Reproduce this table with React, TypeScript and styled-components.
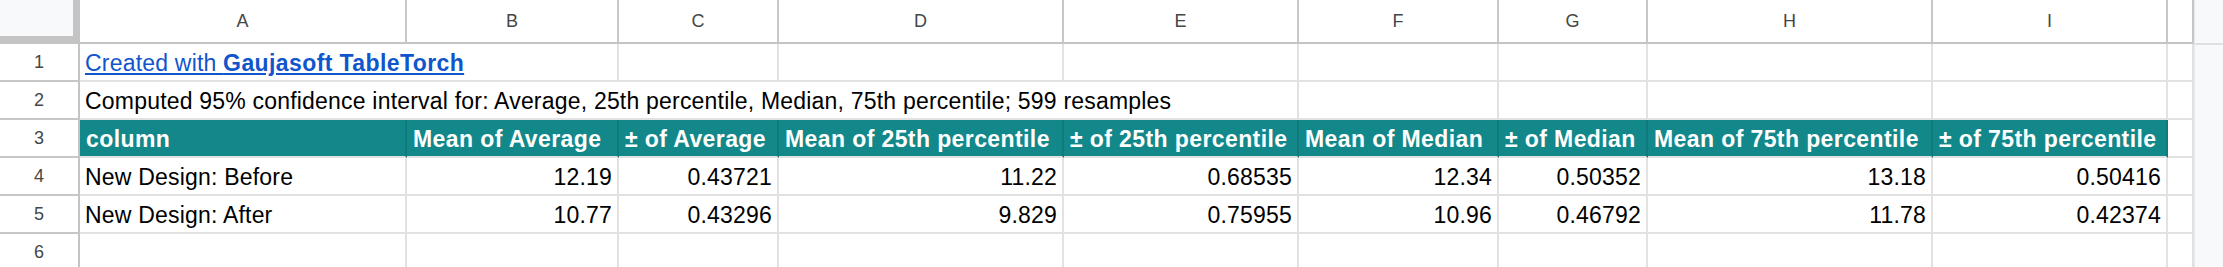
import React from "react";
import styled, { createGlobalStyle } from "styled-components";

const GlobalStyle = createGlobalStyle`
  html, body { margin: 0; padding: 0; background: #ffffff; }
  body { font-family: "Liberation Sans", Arial, sans-serif; overflow: hidden; }
  *, *::before, *::after { box-sizing: border-box; }
`;

const COLS = [327, 212, 160, 285, 235, 200, 149, 285, 235, 26];
const LETTERS = ["A", "B", "C", "D", "E", "F", "G", "H", "I", ""];

const HEADERS = [
  "column",
  "Mean of Average",
  "± of Average",
  "Mean of 25th percentile",
  "± of 25th percentile",
  "Mean of Median",
  "± of Median",
  "Mean of 75th percentile",
  "± of 75th percentile",
];

const ROWS = [
  ["New Design: Before", "12.19", "0.43721", "11.22", "0.68535", "12.34", "0.50352", "13.18", "0.50416"],
  ["New Design: After", "10.77", "0.43296", "9.829", "0.75955", "10.96", "0.46792", "11.78", "0.42374"],
];

const Frame = styled.div`
  display: flex;
  width: 2223px;
  height: 267px;
  overflow: hidden;
`;

const Grid = styled.div`
  display: grid;
  grid-template-columns: 80px ${COLS.map((c) => `${c}px`).join(" ")};
  grid-template-rows: 44px repeat(6, 38px);
  width: 2194px;
  flex: none;
`;

const Corner = styled.div`
  background: #f8f9fa;
  border-right: 7px solid #c4c4c4;
  border-bottom: 8px solid #c4c4c4;
`;

const ColHead = styled.div`
  display: flex;
  align-items: center;
  justify-content: center;
  border-right: 2px solid #c7c7c7;
  border-bottom: 2px solid #c4c4c4;
  font-size: 18px;
  color: #444746;
  background: #ffffff;
`;

const RowHead = styled.div`
  display: flex;
  align-items: center;
  justify-content: center;
  border-right: 2px solid #c4c4c4;
  border-bottom: 2px solid #c7c7c7;
  font-size: 18px;
  color: #444746;
  background: #ffffff;
`;

const Cell = styled.div<{ $align?: "left" | "right"; $span?: number }>`
  display: flex;
  align-items: flex-end;
  justify-content: ${(p) => (p.$align === "right" ? "flex-end" : "flex-start")};
  grid-column: span ${(p) => p.$span ?? 1};
  padding: 0 5px 4px 5px;
  border-right: 2px solid #e2e2e2;
  border-bottom: 2px solid #e2e2e2;
  font-size: 23px;
  line-height: 26px;
  letter-spacing: 0.2px;
  color: #000000;
  white-space: nowrap;
  overflow: visible;
`;

const HeadCell = styled(Cell)`
  background: #12888a;
  color: #ffffff;
  font-weight: 700;
  border-right-color: #0f7b7c;
  padding-left: 6px;
  letter-spacing: 0.4px;
`;

const Link = styled.a`
  color: #1155cc;
  text-decoration: underline;
  text-underline-offset: 2px;
`;

const Strong = styled.b`
  font-weight: 700;
  letter-spacing: 0.4px;
`;

const Scrollbar = styled.div`
  flex: 1;
  background: #f8f9fa;
  border-left: 1px solid #e8e8e8;
`;

const ScrollTop = styled.div`
  height: 45px;
  border-bottom: 2px solid #dde0e5;
`;

export default function App() {
  return (
    <>
      <GlobalStyle />
      <Frame>
        <Grid>
          <Corner />
          {LETTERS.map((l, i) => (
            <ColHead key={`h${i}`}>{l}</ColHead>
          ))}

          <RowHead>1</RowHead>
          <Cell $span={2}>
            <Link href="#">
              Created with <Strong>Gaujasoft TableTorch</Strong>
            </Link>
          </Cell>
          {COLS.slice(2).map((_, i) => (
            <Cell key={`r1${i}`} />
          ))}

          <RowHead>2</RowHead>
          <Cell $span={5}>
            Computed 95% confidence interval for: Average, 25th percentile, Median, 75th percentile; 599 resamples
          </Cell>
          {COLS.slice(5).map((_, i) => (
            <Cell key={`r2${i}`} />
          ))}

          <RowHead>3</RowHead>
          {HEADERS.map((h, i) => (
            <HeadCell key={`th${i}`}>{h}</HeadCell>
          ))}
          <Cell />

          {ROWS.map((row, r) => (
            <React.Fragment key={`row${r}`}>
              <RowHead>{r + 4}</RowHead>
              {row.map((v, i) => (
                <Cell key={`c${r}${i}`} $align={i === 0 ? "left" : "right"}>
                  {v}
                </Cell>
              ))}
              <Cell />
            </React.Fragment>
          ))}

          <RowHead>6</RowHead>
          {COLS.map((_, i) => (
            <Cell key={`r6${i}`} />
          ))}
        </Grid>
        <Scrollbar>
          <ScrollTop />
        </Scrollbar>
      </Frame>
    </>
  );
}
